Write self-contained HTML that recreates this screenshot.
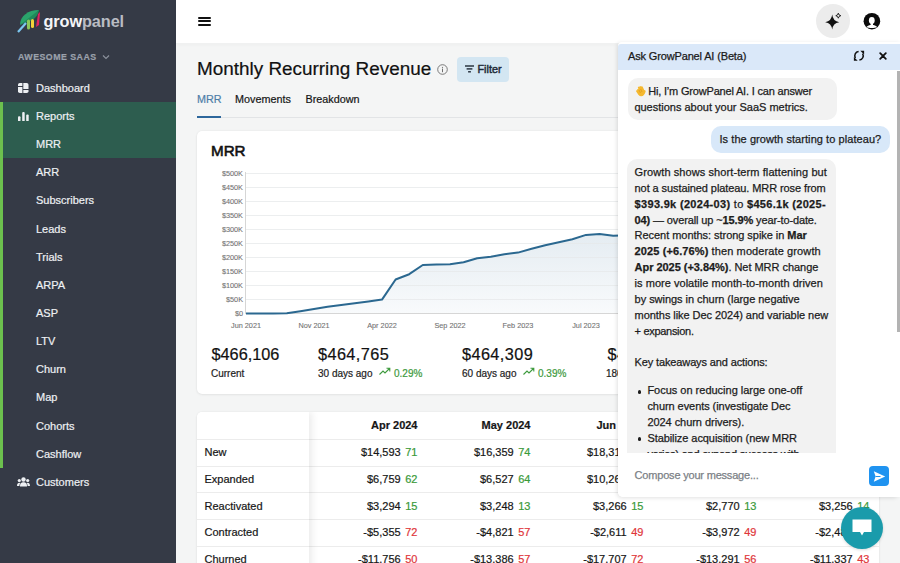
<!DOCTYPE html>
<html><head><meta charset="utf-8">
<style>
*{box-sizing:border-box;margin:0;padding:0}
html,body{width:900px;height:563px;overflow:hidden}
body{font-family:"Liberation Sans",sans-serif;background:#f4f5f5;position:relative;color:#161616;-webkit-text-stroke:0.2px currentColor}
.a{position:absolute;white-space:nowrap}
#side{position:absolute;left:0;top:0;width:176px;height:563px;background:#353a46}
#side .it{position:absolute;left:36px;font-size:11px;color:#eef0f3;line-height:12px}
#hdr{position:absolute;left:176px;top:0;width:724px;height:43px;background:#fff;box-shadow:0 1px 0 #f0f1f1,0 2px 4px rgba(0,0,0,.03)}
.card{position:absolute;background:#fff;border-radius:5px;box-shadow:0 0 2px rgba(0,0,0,.08),0 1px 3px rgba(0,0,0,.05)}
.yl{position:absolute;right:657px;font-size:7.3px;color:#737373;line-height:8px;-webkit-text-stroke:0.1px #737373}
.xl{position:absolute;font-size:7.3px;color:#737373;line-height:8px;width:60px;text-align:center;-webkit-text-stroke:0.1px #737373}
#chat{position:absolute;left:618px;top:42px;width:282px;height:455px;background:#fff;border-radius:4px 0 6px 5px;box-shadow:-1px 1px 4px rgba(0,0,0,.12)}
.tx{font-size:11px;line-height:12px;color:#161616}
.cl{position:absolute;left:16px;font-size:11px;line-height:16px;color:#1a1a1a;white-space:nowrap;-webkit-text-stroke:0.25px currentColor}
</style></head><body>

<!-- SIDEBAR -->
<div id="side">
  <svg class="a" style="left:14px;top:6px" width="30" height="30" viewBox="0 0 30 30">
    <path d="M6 19 C6 10 14 4 25 4 L20 10 Z" fill="#2aa36b"/>
    <path d="M6 19 L25 4 C24 10 20 14 14 16 Z" fill="#1f8a5a"/>
    <path d="M4 26 L12 17" stroke="#7cc6ef" stroke-width="2.2"/>
    <rect x="13" y="13.5" width="3" height="10" rx="1.5" fill="#8cc85a"/>
    <rect x="17" y="13" width="3" height="9" rx="1.5" fill="#f2d23a"/>
    <path d="M22 21 L24 8 L26 6 L25 19 Z" fill="#e0245e"/>
  </svg>
  <div class="a" style="left:43.5px;top:12px;font-size:16.3px;font-weight:bold;letter-spacing:-0.1px;line-height:18px;-webkit-text-stroke:0"><span style="color:#f4f5f8">grow</span><span style="color:#b9bcc3">panel</span></div>
  <div class="a" style="left:18px;top:52px;font-size:8.8px;font-weight:bold;letter-spacing:0.48px;color:#9ba1ac;line-height:10px">AWESOME SAAS</div>
  <svg class="a" style="left:102px;top:54px" width="8" height="6" viewBox="0 0 8 6"><path d="M1 1.5 L4 4.5 L7 1.5" stroke="#8a909b" stroke-width="1.2" fill="none"/></svg>

  <svg class="a" style="left:18px;top:83px" width="10.5" height="10" viewBox="0 0 10.5 10">
    <path d="M1.8 0 H4.4 V3.1 H0 V1.8 A1.8 1.8 0 0 1 1.8 0 Z" fill="#eef0f3"/>
    <path d="M0 3.9 H4.4 V10 H1.8 A1.8 1.8 0 0 1 0 8.2 Z" fill="#eef0f3"/>
    <path d="M5.3 0 H8.7 A1.8 1.8 0 0 1 10.5 1.8 V6.1 H5.3 Z" fill="#eef0f3"/>
    <path d="M5.3 6.9 H10.5 V8.2 A1.8 1.8 0 0 1 8.7 10 H5.3 Z" fill="#eef0f3"/>
  </svg>
  <div class="it" style="top:82px">Dashboard</div>

  <div class="a" style="left:0;top:102px;width:176px;height:56px;background:#2d5d4f"></div>
  <div class="a" style="left:0;top:102px;width:3px;height:365.5px;background:#6cc04e"></div>
  <svg class="a" style="left:17.8px;top:111.5px" width="11" height="9.5" viewBox="0 0 11 9.5">
    <rect x="0" y="4.3" width="2.5" height="5.2" rx="1" fill="#eef0f3"/>
    <rect x="4.2" y="0" width="2.5" height="9.5" rx="1" fill="#eef0f3"/>
    <rect x="8.2" y="2.5" width="2.5" height="7" rx="1" fill="#eef0f3"/>
  </svg>
  <div class="it" style="top:110px">Reports</div>
  <div class="it" style="top:138px">MRR</div>
  <div class="it" style="top:166px">ARR</div>
  <div class="it" style="top:194px">Subscribers</div>
  <div class="it" style="top:223px">Leads</div>
  <div class="it" style="top:251px">Trials</div>
  <div class="it" style="top:279px">ARPA</div>
  <div class="it" style="top:307px">ASP</div>
  <div class="it" style="top:335px">LTV</div>
  <div class="it" style="top:363px">Churn</div>
  <div class="it" style="top:391px">Map</div>
  <div class="it" style="top:420px">Cohorts</div>
  <div class="it" style="top:448px">Cashflow</div>
  <svg class="a" style="left:17px;top:477px" width="13" height="10" viewBox="0 0 13 10">
    <circle cx="6.5" cy="2.5" r="2.2" fill="#eef0f3"/>
    <path d="M3 9.5 C3 6 4.5 5.3 6.5 5.3 C8.5 5.3 10 6 10 9.5 Z" fill="#eef0f3"/>
    <circle cx="2.3" cy="3.5" r="1.6" fill="#eef0f3"/>
    <path d="M0 9 C0 6.5 1 5.8 2.5 5.8 L3.2 6 C2.6 7 2.4 8 2.4 9 Z" fill="#eef0f3"/>
    <circle cx="10.7" cy="3.5" r="1.6" fill="#eef0f3"/>
    <path d="M13 9 C13 6.5 12 5.8 10.5 5.8 L9.8 6 C10.4 7 10.6 8 10.6 9 Z" fill="#eef0f3"/>
  </svg>
  <div class="it" style="top:476px">Customers</div>
</div>

<!-- HEADER -->
<div id="hdr">
  <div class="a" style="left:21.5px;top:16.7px;width:13px;height:2px;background:#111;border-radius:1px"></div>
  <div class="a" style="left:21.5px;top:20.4px;width:13px;height:2px;background:#111;border-radius:1px"></div>
  <div class="a" style="left:21.5px;top:24.1px;width:13px;height:2px;background:#111;border-radius:1px"></div>
  <div class="a" style="left:640px;top:4px;width:34px;height:34px;border-radius:50%;background:#ececec"></div>
  <svg class="a" style="left:648px;top:10px" width="20" height="22" viewBox="0 0 20 22">
    <path d="M8.2 4.6 Q8.9 11.3 15.2 12.2 Q8.9 13.1 8.2 19.6 Q7.5 13.1 1.2 12.2 Q7.5 11.3 8.2 4.6 Z" fill="#111"/>
    <path d="M14.3 3.2 Q14.6 5.4 16.8 5.7 Q14.6 6 14.3 8.2 Q14 6 11.8 5.7 Q14 5.4 14.3 3.2 Z" fill="none" stroke="#111" stroke-width="0.9"/>
  </svg>
  <svg class="a" style="left:687px;top:12px" width="18" height="18" viewBox="0 0 18 18">
    <circle cx="8.9" cy="9.2" r="8.3" fill="#0b0b0b"/>
    <ellipse cx="8.8" cy="8.4" rx="2.9" ry="3.4" fill="#fff"/>
    <rect x="7.6" y="10" width="2.4" height="3.5" fill="#fff"/>
    <path d="M3.4 15.1 C4.4 13.5 6.5 12.9 8.8 12.9 C11.1 12.9 13.2 13.5 14.2 15.1 C12.8 15.9 10.9 16.1 8.8 16.1 C6.7 16.1 4.8 15.9 3.4 15.1 Z" fill="#fff"/>
  </svg>
</div>

<!-- TITLE -->
<div class="a" style="left:197px;top:58px;font-size:18.9px;line-height:22px;color:#111">Monthly Recurring Revenue</div>
<svg class="a" style="left:436.5px;top:63.5px" width="11" height="11" viewBox="0 0 11 11">
  <circle cx="5.5" cy="5.5" r="4.8" fill="none" stroke="#6d6d6d" stroke-width="0.9"/>
  <rect x="5" y="4.6" width="1" height="3.6" fill="#6d6d6d"/><circle cx="5.5" cy="3.3" r=".6" fill="#6d6d6d"/>
</svg>
<div class="a" style="left:457px;top:57px;width:52px;height:25px;border-radius:4px;background:#d3e6f2"></div>
<svg class="a" style="left:464.5px;top:65px" width="9" height="8" viewBox="0 0 9 8">
  <rect x="0" y="0.3" width="9" height="1.4" fill="#1e2a36"/>
  <rect x="1.6" y="3.2" width="5.8" height="1.4" fill="#1e2a36"/>
  <rect x="3.1" y="6.1" width="2.8" height="1.4" fill="#1e2a36"/>
</svg>
<div class="a" style="left:477.5px;top:63px;font-size:10.8px;line-height:12px;color:#1e2a36;-webkit-text-stroke:0.45px #1e2a36">Filter</div>

<!-- TABS -->
<div class="a" style="left:197px;top:93px;font-size:10.8px;line-height:12px;color:#4d7ea8">MRR</div>
<div class="a" style="left:235px;top:93px;font-size:10.8px;line-height:12px;color:#151515">Movements</div>
<div class="a" style="left:305.5px;top:93px;font-size:10.8px;line-height:12px;color:#151515">Breakdown</div>
<div class="a" style="left:197px;top:117px;width:682px;height:1px;background:#e2e4e6"></div>
<div class="a" style="left:197px;top:116px;width:24px;height:2px;background:#2d679c"></div>

<!-- CHART CARD -->
<div class="card" style="left:197px;top:131px;width:682px;height:263px"></div>
<div class="a" style="left:211px;top:143px;font-size:15.2px;line-height:16px;color:#111;-webkit-text-stroke:0.6px #111">MRR</div>

<svg class="a" style="left:0;top:0" width="900" height="563" viewBox="0 0 900 563">
  
  <line x1="245.5" x2="245.5" y1="172" y2="314" stroke="#d6d6d6" stroke-width="1"/>
  <line x1="246" x2="879" y1="313.5" y2="313.5" stroke="#d6d6d6" stroke-width="1"/>
  <defs><linearGradient id="gf" x1="0" y1="0" x2="0" y2="1"><stop offset="0" stop-color="#2d6a96" stop-opacity="0.17"/><stop offset="1" stop-color="#2d6a96" stop-opacity="0.03"/></linearGradient></defs>
  <path id="ln" d="M246 313.6 L259.6 313.6 L273.2 313.5 L286.8 313.2 L300.4 311.2 L314 309 L327.6 306.8 L341.2 305 L354.8 303.2 L368.4 301.4 L382 299.6 L395.6 279.5 L409.2 274.2 L422.8 265 L436.4 264.6 L450 264.2 L463.6 262.2 L477.2 258.3 L490.8 256.8 L504.4 254.3 L518 252.6 L531.6 248.8 L545.2 245.2 L558.8 242.2 L572.4 239.2 L586 234.9 L599.6 234 L613.2 235.8 L626.8 235.2 L640.4 233 L654 231 L667.6 229 L681.2 227 L694.8 225 L708.4 223 L722 221 L735.6 219 L749.2 217 L762.8 214 L776.4 212 L790 210 L803.6 208 L817.2 206 L830.8 204 L844.4 202 L858 200 L871.6 198" fill="none"/>
  <path d="M246 313.6 L259.6 313.6 L273.2 313.5 L286.8 313.2 L300.4 311.2 L314 309 L327.6 306.8 L341.2 305 L354.8 303.2 L368.4 301.4 L382 299.6 L395.6 279.5 L409.2 274.2 L422.8 265 L436.4 264.6 L450 264.2 L463.6 262.2 L477.2 258.3 L490.8 256.8 L504.4 254.3 L518 252.6 L531.6 248.8 L545.2 245.2 L558.8 242.2 L572.4 239.2 L586 234.9 L599.6 234 L613.2 235.8 L626.8 235.2 L640.4 233 L654 231 L667.6 229 L681.2 227 L694.8 225 L708.4 223 L722 221 L735.6 219 L749.2 217 L762.8 214 L776.4 212 L790 210 L803.6 208 L817.2 206 L830.8 204 L844.4 202 L858 200 L871.6 198 L871.6 313 L246 313 Z" fill="url(#gf)"/>
  <g stroke="#e6e8ea" stroke-opacity="0.75" stroke-width="1">
    <line x1="246" x2="879" y1="173.5" y2="173.5"/><line x1="246" x2="879" y1="187.5" y2="187.5"/>
    <line x1="246" x2="879" y1="201.5" y2="201.5"/><line x1="246" x2="879" y1="215.5" y2="215.5"/>
    <line x1="246" x2="879" y1="229.5" y2="229.5"/><line x1="246" x2="879" y1="243.5" y2="243.5"/>
    <line x1="246" x2="879" y1="257.5" y2="257.5"/><line x1="246" x2="879" y1="271.5" y2="271.5"/>
    <line x1="246" x2="879" y1="285.5" y2="285.5"/><line x1="246" x2="879" y1="299.5" y2="299.5"/>
  </g>
  <path d="M246 313.6 L259.6 313.6 L273.2 313.5 L286.8 313.2 L300.4 311.2 L314 309 L327.6 306.8 L341.2 305 L354.8 303.2 L368.4 301.4 L382 299.6 L395.6 279.5 L409.2 274.2 L422.8 265 L436.4 264.6 L450 264.2 L463.6 262.2 L477.2 258.3 L490.8 256.8 L504.4 254.3 L518 252.6 L531.6 248.8 L545.2 245.2 L558.8 242.2 L572.4 239.2 L586 234.9 L599.6 234 L613.2 235.8 L626.8 235.2 L640.4 233 L654 231 L667.6 229 L681.2 227 L694.8 225 L708.4 223 L722 221 L735.6 219 L749.2 217 L762.8 214 L776.4 212 L790 210 L803.6 208 L817.2 206 L830.8 204 L844.4 202 L858 200 L871.6 198" fill="none" stroke="#2b6890" stroke-width="2" stroke-linejoin="round"/>
</svg>
<div class="yl" style="top:170px">$500K</div>
<div class="yl" style="top:184px">$450K</div>
<div class="yl" style="top:198px">$400K</div>
<div class="yl" style="top:212px">$350K</div>
<div class="yl" style="top:226px">$300K</div>
<div class="yl" style="top:240px">$250K</div>
<div class="yl" style="top:254px">$200K</div>
<div class="yl" style="top:268px">$150K</div>
<div class="yl" style="top:282px">$100K</div>
<div class="yl" style="top:296px">$50K</div>
<div class="yl" style="top:310px">$0</div>
<div class="xl" style="left:216px;top:322px">Jun 2021</div>
<div class="xl" style="left:284px;top:322px">Nov 2021</div>
<div class="xl" style="left:352px;top:322px">Apr 2022</div>
<div class="xl" style="left:420px;top:322px">Sep 2022</div>
<div class="xl" style="left:488px;top:322px">Feb 2023</div>
<div class="xl" style="left:556px;top:322px">Jul 2023</div>

<!-- STATS -->
<div class="a" style="left:211.5px;top:346px;font-size:16.3px;line-height:16px;color:#111;letter-spacing:0">$466,106</div>
<div class="a" style="left:211px;top:368px;font-size:10px;line-height:11px;color:#222">Current</div>
<div class="a" style="left:318px;top:346px;font-size:16.3px;line-height:16px;color:#111;letter-spacing:0.4px">$464,765</div>
<div class="a" style="left:318px;top:368px;font-size:10px;line-height:11px;color:#222">30 days ago</div>
<svg class="a" style="left:379px;top:367px" width="12" height="9" viewBox="0 0 12 9"><path d="M0.5 7.5 L4 4 L6 6 L10.5 1.5 M7.5 1.2 L10.8 1.2 L10.8 4.5" stroke="#3d9a3d" stroke-width="1.1" fill="none"/></svg>
<div class="a" style="left:394px;top:368px;font-size:10px;line-height:11px;color:#3d9a3d">0.29%</div>
<div class="a" style="left:462px;top:346px;font-size:16.3px;line-height:16px;color:#111;letter-spacing:0.4px">$464,309</div>
<div class="a" style="left:462px;top:368px;font-size:10px;line-height:11px;color:#222">60 days ago</div>
<svg class="a" style="left:523px;top:367px" width="12" height="9" viewBox="0 0 12 9"><path d="M0.5 7.5 L4 4 L6 6 L10.5 1.5 M7.5 1.2 L10.8 1.2 L10.8 4.5" stroke="#3d9a3d" stroke-width="1.1" fill="none"/></svg>
<div class="a" style="left:538px;top:368px;font-size:10px;line-height:11px;color:#3d9a3d">0.39%</div>
<div class="a" style="left:607.5px;top:346px;font-size:16.3px;line-height:16px;color:#111;letter-spacing:0.4px">$463,420</div>
<div class="a" style="left:606px;top:368px;font-size:10px;line-height:11px;color:#222">180 days ago</div>

<!-- TABLE -->
<div class="card" id="tbl" style="left:197px;top:412px;width:682px;height:170px;overflow:hidden">
<div class="a" style="left:0;top:27.0px;width:682px;height:1px;background:#ececec"></div>
<div class="a" style="left:0;top:53.7px;width:682px;height:1px;background:#ececec"></div>
<div class="a" style="left:0;top:80.4px;width:682px;height:1px;background:#ececec"></div>
<div class="a" style="left:0;top:107.1px;width:682px;height:1px;background:#ececec"></div>
<div class="a" style="left:0;top:133.8px;width:682px;height:1px;background:#ececec"></div>
<div class="a" style="left:0;top:0;width:112px;height:170px;background:#fff;box-shadow:3px 0 7px rgba(0,0,0,.08);z-index:2"></div>
<div class="a" style="left:0;top:27.0px;width:112px;height:1px;background:#ececec;z-index:3"></div>
<div class="a" style="left:0;top:53.7px;width:112px;height:1px;background:#ececec;z-index:3"></div>
<div class="a" style="left:0;top:80.4px;width:112px;height:1px;background:#ececec;z-index:3"></div>
<div class="a" style="left:0;top:107.1px;width:112px;height:1px;background:#ececec;z-index:3"></div>
<div class="a" style="left:0;top:133.8px;width:112px;height:1px;background:#ececec;z-index:3"></div>
<div class="a tx" style="left:7.5px;top:34.1px;z-index:3">New</div>
<div class="a tx" style="left:7.5px;top:60.8px;z-index:3">Expanded</div>
<div class="a tx" style="left:7.5px;top:87.5px;z-index:3">Reactivated</div>
<div class="a tx" style="left:7.5px;top:114.2px;z-index:3">Contracted</div>
<div class="a tx" style="left:7.5px;top:140.9px;z-index:3">Churned</div>
<div class="a tx" style="right:461.5px;top:7.2px;font-weight:bold">Apr 2024</div>
<div class="a tx" style="right:461.5px;top:34.1px">$14,593<span style="color:#3a9a3a;margin-left:4.6px">71</span></div>
<div class="a tx" style="right:461.5px;top:60.8px">$6,759<span style="color:#3a9a3a;margin-left:4.6px">62</span></div>
<div class="a tx" style="right:461.5px;top:87.5px">$3,294<span style="color:#3a9a3a;margin-left:4.6px">15</span></div>
<div class="a tx" style="right:461.5px;top:114.2px">-$5,355<span style="color:#e0363a;margin-left:4.6px">72</span></div>
<div class="a tx" style="right:461.5px;top:140.9px">-$11,756<span style="color:#e0363a;margin-left:4.6px">50</span></div>
<div class="a tx" style="right:348.5px;top:7.2px;font-weight:bold">May 2024</div>
<div class="a tx" style="right:348.5px;top:34.1px">$16,359<span style="color:#3a9a3a;margin-left:4.6px">74</span></div>
<div class="a tx" style="right:348.5px;top:60.8px">$6,527<span style="color:#3a9a3a;margin-left:4.6px">64</span></div>
<div class="a tx" style="right:348.5px;top:87.5px">$3,248<span style="color:#3a9a3a;margin-left:4.6px">13</span></div>
<div class="a tx" style="right:348.5px;top:114.2px">-$4,821<span style="color:#e0363a;margin-left:4.6px">57</span></div>
<div class="a tx" style="right:348.5px;top:140.9px">-$13,386<span style="color:#e0363a;margin-left:4.6px">57</span></div>
<div class="a tx" style="right:235.5px;top:7.2px;font-weight:bold">Jun 2024</div>
<div class="a tx" style="right:235.5px;top:34.1px">$18,312<span style="color:#3a9a3a;margin-left:4.6px">78</span></div>
<div class="a tx" style="right:235.5px;top:60.8px">$10,264<span style="color:#3a9a3a;margin-left:4.6px">70</span></div>
<div class="a tx" style="right:235.5px;top:87.5px">$3,266<span style="color:#3a9a3a;margin-left:4.6px">15</span></div>
<div class="a tx" style="right:235.5px;top:114.2px">-$2,611<span style="color:#e0363a;margin-left:4.6px">49</span></div>
<div class="a tx" style="right:235.5px;top:140.9px">-$17,707<span style="color:#e0363a;margin-left:4.6px">72</span></div>
<div class="a tx" style="right:122.5px;top:7.2px;font-weight:bold">Jul 2024</div>
<div class="a tx" style="right:122.5px;top:34.1px">$15,840<span style="color:#3a9a3a;margin-left:4.6px">69</span></div>
<div class="a tx" style="right:122.5px;top:60.8px">$7,112<span style="color:#3a9a3a;margin-left:4.6px">58</span></div>
<div class="a tx" style="right:122.5px;top:87.5px">$2,770<span style="color:#3a9a3a;margin-left:4.6px">13</span></div>
<div class="a tx" style="right:122.5px;top:114.2px">-$3,972<span style="color:#e0363a;margin-left:4.6px">49</span></div>
<div class="a tx" style="right:122.5px;top:140.9px">-$13,291<span style="color:#e0363a;margin-left:4.6px">56</span></div>
<div class="a tx" style="right:9.5px;top:7.2px;font-weight:bold">Aug 2024</div>
<div class="a tx" style="right:9.5px;top:34.1px">$17,205<span style="color:#3a9a3a;margin-left:4.6px">75</span></div>
<div class="a tx" style="right:9.5px;top:60.8px">$8,020<span style="color:#3a9a3a;margin-left:4.6px">61</span></div>
<div class="a tx" style="right:9.5px;top:87.5px">$3,256<span style="color:#3a9a3a;margin-left:4.6px">14</span></div>
<div class="a tx" style="right:9.5px;top:114.2px">-$2,483<span style="color:#e0363a;margin-left:4.6px">44</span></div>
<div class="a tx" style="right:9.5px;top:140.9px">-$11,337<span style="color:#e0363a;margin-left:4.6px">43</span></div>
<div class="a tx" style="right:-103.5px;top:7.2px;font-weight:bold">Sep 2024</div>
<div class="a tx" style="right:-103.5px;top:34.1px">$16,002<span style="color:#3a9a3a;margin-left:4.6px">70</span></div>
<div class="a tx" style="right:-103.5px;top:60.8px">$7,540<span style="color:#3a9a3a;margin-left:4.6px">60</span></div>
<div class="a tx" style="right:-103.5px;top:87.5px">$3,100<span style="color:#3a9a3a;margin-left:4.6px">12</span></div>
<div class="a tx" style="right:-103.5px;top:114.2px">-$3,020<span style="color:#e0363a;margin-left:4.6px">47</span></div>
<div class="a tx" style="right:-103.5px;top:140.9px">-$12,100<span style="color:#e0363a;margin-left:4.6px">52</span></div>
</div>

<!-- CHAT -->
<div id="chat">
<div class="a" style="left:0;top:1.5px;width:282px;height:26.5px;background:#dae8f9;border-radius:3px 0 0 0"></div>
<div class="cl" style="left:10.0px;top:6.4px;letter-spacing:-0.149px;color:#1a1a1a">Ask GrowPanel AI (Beta)</div>
<svg class="a" style="left:234.5px;top:8px" width="12" height="12" viewBox="0 0 12 12">
<path d="M5.6 1.5 A4.3 4.3 0 0 0 2.4 8.0" fill="none" stroke="#111" stroke-width="1.5"/>
<path d="M6.4 10.1 A4.3 4.3 0 0 0 9.6 3.6" fill="none" stroke="#111" stroke-width="1.5"/>
<path d="M0.9 7.0 L0.9 10.8 L4.7 10.8 Z" fill="#111"/>
<path d="M11.1 4.6 L11.1 0.8 L7.3 0.8 Z" fill="#111"/>
</svg>
<svg class="a" style="left:260.5px;top:10px" width="8" height="8" viewBox="0 0 8 8">
<path d="M1.2 1.2 L6.8 6.8 M6.8 1.2 L1.2 6.8" stroke="#111" stroke-width="1.8" stroke-linecap="round"/></svg>
<div class="a" style="left:0;top:28px;width:282px;height:383px;overflow:hidden">
<div class="a" style="left:9.5px;top:8px;width:209px;height:41.5px;background:#f2f2f2;border-radius:10px"></div>
<svg class="a" style="left:16.5px;top:14.5px" width="12" height="12" viewBox="0 0 12 12">
<path d="M2.5 5.5 C1.5 4.5 2.5 3.5 3.5 4.2 L3 3 C2.5 2 3.6 1.4 4.3 2.2 L4.4 1.8 C4.3 0.8 5.6 0.6 6 1.5 L6.3 1.6 C6.5 0.9 7.7 1 7.8 1.9 L9.2 5 C10.6 5.2 11 6.2 10.4 7.2 C9.6 9.2 8.6 11.2 6.2 11.3 C4.2 11.4 3.3 10 2.5 8.6 L1.2 6.6 C0.6 5.6 1.8 4.9 2.5 5.5 Z" fill="#f5b82e"/>
<path d="M4 5 L5.5 8 M5.6 4 L7 7" stroke="#d8901a" stroke-width=".6" fill="none"/>
</svg>
<div class="cl" style="left:30.2px;top:12.9px;letter-spacing:-0.184px;color:#1c1c1c">Hi, I’m GrowPanel AI. I can answer</div>
<div class="cl" style="left:16.4px;top:29.0px;letter-spacing:-0.005px;color:#1c1c1c">questions about your SaaS metrics.</div>
<div class="a" style="left:93px;top:56px;width:179px;height:26.5px;background:#d8e8f9;border-radius:10px"></div>
<div class="cl" style="left:101.5px;top:61.4px;letter-spacing:0.063px;color:#1c1c1c">Is the growth starting to plateau?</div>
<div class="a" style="left:8.6px;top:88.6px;width:209px;height:330px;background:#f2f2f2;border-radius:10px"></div>
<div class="cl" style="left:16.6px;top:93.9px;letter-spacing:0.091px;color:#1c1c1c">Growth shows short-term flattening but</div>
<div class="cl" style="left:16.6px;top:109.8px;letter-spacing:-0.088px;color:#1c1c1c">not a sustained plateau. MRR rose from</div>
<div class="cl" style="left:16.6px;top:125.6px;letter-spacing:0.312px;color:#1c1c1c"><b>$393.9k (2024-03)</b> to <b>$456.1k (2025-</b></div>
<div class="cl" style="left:16.6px;top:141.5px;letter-spacing:-0.125px;color:#1c1c1c"><b>04)</b> — overall up ~<b>15.9%</b> year-to-date.</div>
<div class="cl" style="left:16.6px;top:157.4px;letter-spacing:-0.043px;color:#1c1c1c">Recent months: strong spike in <b>Mar</b></div>
<div class="cl" style="left:16.6px;top:173.3px;letter-spacing:0.107px;color:#1c1c1c"><b>2025 (+6.76%)</b> then moderate growth</div>
<div class="cl" style="left:16.6px;top:189.2px;letter-spacing:-0.038px;color:#1c1c1c"><b>Apr 2025 (+3.84%)</b>. Net MRR change</div>
<div class="cl" style="left:16.6px;top:205.0px;letter-spacing:0.030px;color:#1c1c1c">is more volatile month-to-month driven</div>
<div class="cl" style="left:16.6px;top:220.9px;letter-spacing:-0.041px;color:#1c1c1c">by swings in churn (large negative</div>
<div class="cl" style="left:16.6px;top:236.8px;letter-spacing:-0.057px;color:#1c1c1c">months like Dec 2024) and variable new</div>
<div class="cl" style="left:16.6px;top:252.7px;letter-spacing:-0.303px;color:#1c1c1c">+ expansion.</div>
<div class="cl" style="left:16.6px;top:283.9px;letter-spacing:-0.133px;color:#1c1c1c">Key takeaways and actions:</div>
<div class="a" style="left:19.7px;top:319.8px;width:3.8px;height:3.8px;border-radius:50%;background:#1c1c1c"></div>
<div class="cl" style="left:29.4px;top:312.4px;letter-spacing:-0.008px;color:#1c1c1c">Focus on reducing large one-off</div>
<div class="cl" style="left:29.4px;top:327.7px;letter-spacing:-0.062px;color:#1c1c1c">churn events (investigate Dec</div>
<div class="cl" style="left:29.4px;top:343.7px;letter-spacing:-0.049px;color:#1c1c1c">2024 churn drivers).</div>
<div class="a" style="left:19.7px;top:367.1px;width:3.8px;height:3.8px;border-radius:50%;background:#1c1c1c"></div>
<div class="cl" style="left:29.4px;top:359.7px;letter-spacing:-0.069px;color:#1c1c1c">Stabilize acquisition (new MRR</div>
<div class="cl" style="left:29.4px;top:375.5px;letter-spacing:-0.228px;color:#1c1c1c">varies) and expand success with</div>
</div>
<div class="a" style="left:279px;top:28.7px;width:3px;height:261.7px;background:#b3b3b3"></div>
<div class="a" style="left:0;top:411px;width:282px;height:44px;background:#fff;border-radius:0 0 0 5px"></div>
<div class="cl" style="left:16.6px;top:425.2px;letter-spacing:-0.194px;color:#7b7f86">Compose your message...</div>
<div class="a" style="left:251px;top:424px;width:20px;height:19.5px;border-radius:4px;background:#1f93f0"></div>
<svg class="a" style="left:254.5px;top:427.5px" width="13" height="13" viewBox="0 0 13 13">
<path d="M0.8 1.2 L12.2 6.5 L0.8 11.8 L2.6 6.5 Z" fill="#fff"/>
<path d="M2.6 6.5 L7.5 6.5" stroke="#1f93f0" stroke-width="1"/></svg>
</div>

<!-- FAB -->
<div class="a" style="left:841px;top:507px;width:42px;height:42px;border-radius:50%;background:#1a9bab;box-shadow:0 1px 3px rgba(0,0,0,.15)"></div>
<svg class="a" style="left:851px;top:518px" width="22" height="20" viewBox="0 0 22 20">
<path d="M1.5 1.5 L20.5 1.5 L20.5 14 L13 14 L11 17.5 L9 14 L1.5 14 Z" fill="#fff"/></svg>
</body></html>
